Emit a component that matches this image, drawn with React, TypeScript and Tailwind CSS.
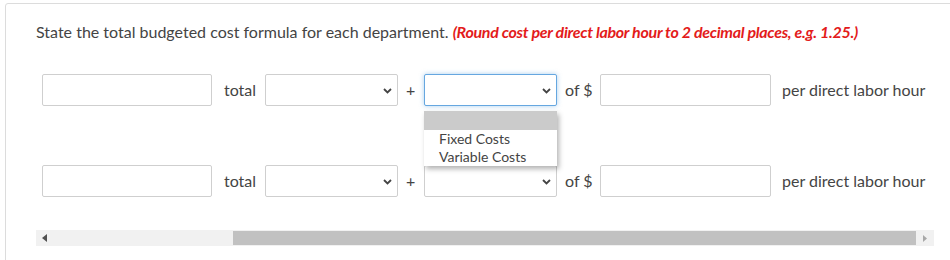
import { useState } from "react";

const Chevron = () => (
  <svg width="9" height="6" viewBox="0 0 9 6" className="absolute right-[5px] top-[13px]">
    <path d="M1 1 L4.5 4.5 L8 1" fill="none" stroke="#444" strokeWidth="1.8" />
  </svg>
);

const TextBox = ({ w }: { w: string }) => (
  <div className={`${w} h-8 shrink-0 border border-[#cfcfcf] rounded-[2px] bg-white`} />
);

const Select = ({ focused = false, open = false }: { focused?: boolean; open?: boolean }) => (
  <div
    className={`relative w-[133px] h-8 shrink-0 rounded-[2px] bg-white border ${
      focused
        ? "border-[#66a7e0] shadow-[0_0_5px_rgba(102,167,224,0.55)]"
        : "border-[#cfcfcf]"
    }`}
  >
    <Chevron />
    {open && (
      <div className="absolute left-[-1px] top-[36px] w-[133px] z-10 bg-white shadow-[2px_3px_5px_rgba(0,0,0,0.3)] text-[14px] leading-[18px] text-[#444]">
        <div className="h-[19px] bg-[#cbcbcb]" />
        <div className="pl-[15px]">Fixed Costs</div>
        <div className="pl-[15px]">Variable Costs</div>
      </div>
    )}
  </div>
);

const FormulaRow = ({ open = false }: { open?: boolean }) => (
  <div className="flex items-center pl-[6px] text-[16px] text-[#444]">
    <TextBox w="w-[170px]" />
    <span className="ml-[12px] w-[41px]">total</span>
    <Select />
    <span className="w-[26px] pl-[8px]">+</span>
    <Select focused={open} open={open} />
    <span className="w-[43px] pl-[8px]">of $</span>
    <TextBox w="w-[171px]" />
    <span className="ml-[11px] whitespace-nowrap">per direct labor hour</span>
  </div>
);

const FakeScrollbar = () => (
  <div className="flex h-4 w-[898px] bg-[#f1f1f1]">
    <div className="w-4 flex items-center justify-center">
      <svg width="5" height="8" viewBox="0 0 5 8">
        <path d="M5 0 L0 4 L5 8 Z" fill="#505050" />
      </svg>
    </div>
    <div className="w-[181px]" />
    <div className="flex-1 bg-[#c1c1c1] my-[1px]" />
    <div className="w-[18px] flex items-center justify-center">
      <svg width="4" height="7" viewBox="0 0 4 7">
        <path d="M0 0 L4 3.5 L0 7 Z" fill="#a8a8a8" />
      </svg>
    </div>
  </div>
);

export default function App() {
  const [open] = useState(true);
  return (
    <div className="w-[950px] h-[260px] overflow-hidden bg-white pl-[5px] pt-[3px] font-['Lato',sans-serif]">
      <div className="w-[980px] h-[300px] border border-[#dcdcdc] rounded-tl-[3px] pl-[30px] pt-[17px]">
        <p className="text-[16px] leading-[22px] text-[#444] whitespace-nowrap">
          State the total budgeted cost formula for each department.{" "}
          <em className="font-bold text-[#e31b1b] tracking-[-0.3px]">
            (Round cost per direct labor hour to 2 decimal places, e.g. 1.25.)
          </em>
        </p>
        <div className="mt-[31px]">
          <FormulaRow open={open} />
          <div className="mt-[59px]">
            <FormulaRow />
          </div>
        </div>
        <div className="mt-[33px]">
          <FakeScrollbar />
        </div>
      </div>
    </div>
  );
}
